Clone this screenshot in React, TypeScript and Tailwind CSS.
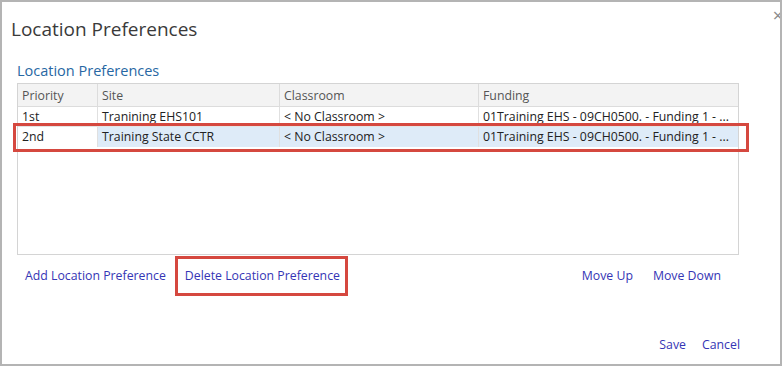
import React from 'react';

const font = { fontFamily: '"Open Sans", "Noto Sans", sans-serif' };

const rows = [
  { priority: '1st', site: 'Tranining EHS101', classroom: '< No Classroom >', funding: '01Training EHS - 09CH0500. - Funding 1 - ...' },
  { priority: '2nd', site: 'Training State CCTR', classroom: '< No Classroom >', funding: '01Training EHS - 09CH0500. - Funding 1 - ...' },
];

export default function App() {
  return (
    <div style={font} className="relative w-[782px] h-[366px] bg-white border-2 border-[#b4b4b4] overflow-hidden">
      {/* close */}
      <span className="absolute right-[-3px] top-[4px] text-[18px] leading-none text-[#8a8a8a]">×</span>

      <h1 className="pl-[9px] pt-[14px] text-[19px] leading-[26px] text-[#3a3a3a]">Location Preferences</h1>

      <div className="pl-[15px] pt-[20px]">
        <h2 className="text-[14.5px] leading-[18px] text-[#2767a3]">Location Preferences</h2>

        {/* table */}
        <div className="mt-[3px] w-[722px] h-[172px] border border-[#d4d4d4] text-[12.3px] leading-[19px]">
          <div className="grid grid-cols-[79px_182px_199px_1fr] h-[23px] bg-[#f3f3f3] border-b border-[#dcdcdc] text-[#555]">
            <div className="px-[4px] leading-[23px]">Priority</div>
            <div className="px-[4px] leading-[23px] border-l border-[#dcdcdc]">Site</div>
            <div className="px-[4px] leading-[23px] border-l border-[#dcdcdc]">Classroom</div>
            <div className="px-[4px] leading-[23px] border-l border-[#dcdcdc]">Funding</div>
          </div>
          {rows.map((r, i) => {
            const sel = i === 1;
            return (
              <div
                key={r.priority}
                className={`relative grid grid-cols-[79px_182px_199px_1fr] h-[20px] text-[#222] ${sel ? 'bg-[#deebf8]' : 'border-b border-[#e4e4e4]'}`}
              >
                <div className={`px-[4px] ${sel ? 'bg-white' : ''}`}>{r.priority}</div>
                <div className="px-[4px] border-l border-[#e0e0e0]">{r.site}</div>
                <div className="px-[4px] border-l border-[#e0e0e0]">{r.classroom}</div>
                <div className="px-[4px] border-l border-[#e0e0e0] whitespace-nowrap">{r.funding}</div>
                {sel && (
                  <div className="absolute left-[-5px] right-[-11px] top-[-4px] bottom-[-5px] border-[3px] border-[#d5483f]" />
                )}
              </div>
            );
          })}
        </div>

        {/* actions */}
        <div className="flex items-center mt-[8px] h-[26px] text-[12.3px] text-[#3535b5] pr-[59px]">
          <a className="ml-[8px] cursor-pointer">Add Location Preference</a>
          <a className="relative ml-[19px] cursor-pointer">
            Delete Location Preference
            <span className="absolute left-[-10px] right-[-8px] top-[-11px] bottom-[-11px] border-[3px] border-[#d5483f]" />
          </a>
          <div className="flex-1" />
          <a className="cursor-pointer">Move Up</a>
          <a className="ml-[20px] cursor-pointer">Move Down</a>
        </div>

        <div className="flex justify-end gap-[16px] mt-[47px] pr-[40px] text-[12.3px] text-[#3535b5]">
          <a className="cursor-pointer">Save</a>
          <a className="cursor-pointer">Cancel</a>
        </div>
      </div>
    </div>
  );
}
